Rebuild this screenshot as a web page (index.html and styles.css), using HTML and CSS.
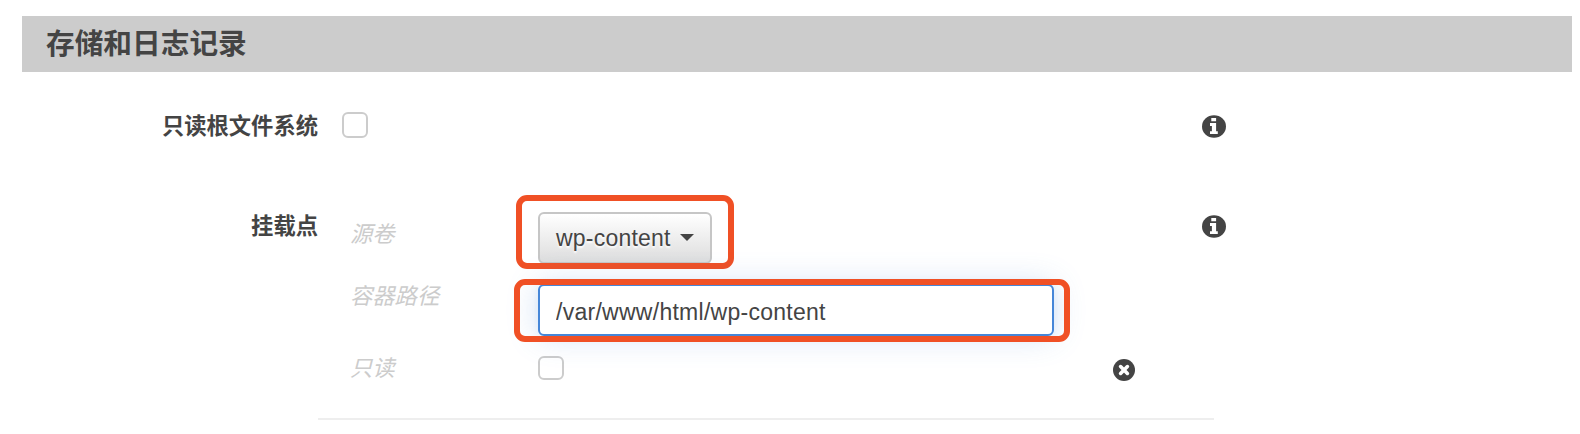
FILE: index.html
```html
<!DOCTYPE html>
<html lang="zh-CN">
<head>
<meta charset="utf-8">
<title>存储和日志记录</title>
<link rel="stylesheet" href="styles.css">
</head>
<body>
<main class="panel">
  <h2 class="panel-title">存储和日志记录</h2>
  <div class="form-row form-row-root">
    <span class="label">只读根文件系统</span>
    <div class="control"><span class="checkbox" role="checkbox" aria-checked="false"></span></div>
    <svg class="info" viewBox="0 0 24 23"><ellipse cx="12" cy="11.5" rx="12" ry="11.2"/><path class="glyph" d="M9.3 3h4.8v3.3H9.3zM8 8h6.1v8.2h1.7v2.9H8v-2.9h1.9v-5.3H8z"/></svg>
  </div>
  <div class="form-row form-row-mount">
    <span class="label">挂载点</span>
    <div class="mount">
      <div class="field field-volume">
        <span class="hint">源卷</span>
        <div class="marked marked-volume">
          <button class="dropdown" type="button"><span>wp-content</span><span class="caret"></span></button>
        </div>
      </div>
      <div class="field field-path">
        <span class="hint">容器路径</span>
        <div class="marked marked-path">
          <input class="text-input" type="text" value="/var/www/html/wp-content">
        </div>
      </div>
      <div class="field field-readonly">
        <span class="hint">只读</span>
        <span class="checkbox checkbox-short" role="checkbox" aria-checked="false"></span>
        <svg class="remove" viewBox="0 0 22 22"><circle cx="11" cy="11" r="11"/><path class="cross" d="M7.6 7.6l6.8 6.8M14.4 7.6l-6.8 6.8"/></svg>
      </div>
    </div>
    <svg class="info" viewBox="0 0 24 23"><ellipse cx="12" cy="11.5" rx="12" ry="11.2"/><path class="glyph" d="M9.3 3h4.8v3.3H9.3zM8 8h6.1v8.2h1.7v2.9H8v-2.9h1.9v-5.3H8z"/></svg>
  </div>
</main>
</body>
</html>
```
FILE: styles.css
```css
* { box-sizing: border-box; }
body {
  margin: 0;
  background: #fff;
  color: #444;
  font-family: "Liberation Sans", "Noto Sans CJK SC", sans-serif;
  font-size: 22.3px;
  overflow: hidden;
}
.panel { padding: 16px 8px 0 22px; }
.panel-title {
  margin: 0;
  height: 56px;
  padding-left: 24px;
  background: #ccc;
  font-size: 28.7px;
  line-height: 57px;
}
.form-row {
  display: grid;
  grid-template-columns: 296px 884px 24px;
  align-items: start;
}
.form-row-root { margin-top: 40px; height: 100px; }
.label { font-weight: bold; line-height: 30px; text-align: right; }
.control { padding-left: 24px; }
.checkbox {
  display: block;
  width: 26px;
  height: 26px;
  border: 2px solid #ccc;
  border-radius: 6px;
  background: #fff;
}
.checkbox-short { height: 24px; }
.info { width: 24px; height: 23px; margin-top: 3px; fill: #444; }
.info .glyph { fill: #fff; }
.mount {
  width: 896px;
  height: 208px;
  padding-left: 32px;
  border-bottom: 2px solid #eee;
}
.field {
  display: grid;
  grid-template-columns: 188px 575px 22px;
  align-items: start;
}
.field-volume { height: 72px; }
.field-path { height: 72px; }
.hint { color: #ccc; font-style: italic; line-height: 30px; }
.field-volume .hint { margin-top: 8px; }
.field-path .hint { margin-top: -2px; }
.field-readonly .hint { margin-top: -2px; }
.marked { position: relative; justify-self: start; }
.marked::after {
  content: "";
  position: absolute;
  border: 6px solid #f05025;
  border-radius: 11px;
  pointer-events: none;
}
.marked-volume::after { inset: -17px -22px -5px -22px; }
.marked-path::after { inset: -5px -16px -6px -24px; }
.dropdown {
  display: flex;
  align-items: center;
  gap: 9px;
  width: 174px;
  height: 52px;
  padding: 1px 0 0 16px;
  border: 2px solid #c6c6c6;
  border-radius: 6px;
  background: linear-gradient(#fff, #ddd);
  color: #444;
  font: 23px "Liberation Sans", sans-serif;
  letter-spacing: .22px;
  text-shadow: 0 2px 2px #fff;
}
.caret {
  margin-top: -3px;
  border: 7px solid transparent;
  border-top: 7px solid #444;
  border-bottom: 0;
}
.text-input {
  display: block;
  width: 516px;
  height: 52px;
  padding: 4px 16px 0;
  border: 2px solid #4586d8;
  border-radius: 6px;
  outline: none;
  background: #fff;
  box-shadow: 0 0 32px rgba(69, 134, 216, .24), 0 0 8px rgba(69, 134, 216, .1);
  color: #444;
  font: 23px "Liberation Sans", sans-serif;
  letter-spacing: .27px;
}
.remove { width: 22px; height: 22px; margin-top: 3px; fill: #444; }
.remove .cross { stroke: #fff; stroke-width: 3.6; stroke-linecap: round; }
```
